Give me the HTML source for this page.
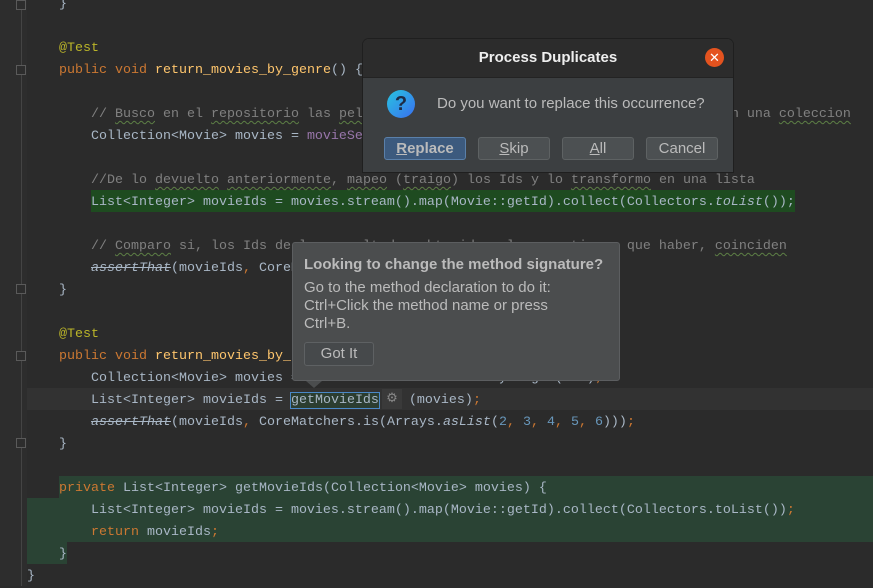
<!DOCTYPE html>
<html><head><meta charset="utf-8">
<style>
body{margin:0;width:873px;height:586px;overflow:hidden;background:#2b2b2b;position:relative;font-family:"Liberation Mono",monospace;}
.gut{position:absolute;left:0;top:0;width:27px;height:586px;background:#2d2d2d;}
.ln{position:absolute;left:27px;height:22px;line-height:22px;font-size:13.33px;color:#a9b7c6;white-space:pre;margin-top:2px}
.k{color:#cc7832}.a{color:#bbb529}.m{color:#ffc66d}.c{color:#808080}.p{color:#9876aa}.n{color:#6897bb}
.s{text-decoration:line-through;font-style:italic}.i{font-style:italic}
.w{text-decoration:underline wavy #5d7f45;text-decoration-thickness:1px;text-underline-offset:3px}
.bg{position:absolute;}
.fold{position:absolute;left:16px;width:10px;height:10px;border:1px solid #5a5a5a;box-sizing:border-box;background:#2d2d2d}
.ui{font-family:"Liberation Sans","DejaVu Sans",sans-serif}
.btn{position:absolute;top:137px;height:23px;border:1px solid #5e6263;background:#4c5052;border-radius:3px;box-sizing:border-box;color:#bbbbbb;font-size:15px;line-height:21px;text-align:center}
</style></head><body>
<div class="gut"></div>
<div style="position:absolute;left:21px;top:0;width:1px;height:586px;background:#444"></div>
<div class="bg" style="left:91px;top:190px;width:704px;height:22px;background:#1e4b20"></div>
<div class="bg" style="left:27px;top:388px;width:846px;height:22px;background:#323232"></div>
<div class="bg" style="left:59px;top:476px;width:814px;height:22px;background:#2a4334"></div>
<div class="bg" style="left:27px;top:498px;width:846px;height:44px;background:#2a4334"></div>
<div class="bg" style="left:27px;top:542px;width:40px;height:22px;background:#2a4334"></div>
<div class="fold" style="top:0"></div><div class="fold" style="top:65px"></div><div class="fold" style="top:284px"></div><div class="fold" style="top:351px"></div><div class="fold" style="top:438px"></div>

<div class="ln" style="top:-8px">    }</div>
<div class="ln" style="top:36px">    <span class="a">@Test</span></div>
<div class="ln" style="top:58px">    <span class="k">public void </span><span class="m">return_movies_by_genre</span>() {</div>
<div class="ln" style="top:102px">        <span class="c">// <span class="w">Busco</span> en el <span class="w">repositorio</span> las <span class="w">peliculas</span> del genero indicado y las guardo toda en una <span class="w">coleccion</span></span></div>
<div class="ln" style="top:124px">        Collection&lt;Movie&gt; movies = <span class="p">movieService</span>.findMoviesByGenre(Genre.<span class="p i">ACTION</span>);</div>
<div class="ln" style="top:168px">        <span class="c">//De lo <span class="w">devuelto</span> <span class="w">anteriormente</span>, <span class="w">mapeo</span> (<span class="w">traigo</span>) los Ids y lo <span class="w">transformo</span> en una lista</span></div>
<div class="ln" style="top:190px">        List&lt;Integer&gt; movieIds = movies.stream().map(Movie::getId).collect(Collectors.<span class="i">toList</span>());</div>
<div class="ln" style="top:234px">        <span class="c">// <span class="w">Comparo</span> si, los Ids de los resultados obtenidos, los que tienen que haber, <span class="w">coinciden</span></span></div>
<div class="ln" style="top:256px">        <span class="s">assertThat</span>(movieIds<span class="k">, </span>CoreMatchers.is(Arrays.<span class="i">asList</span>(<span class="n">1</span><span class="k">, </span><span class="n">2</span>)));</div>
<div class="ln" style="top:278px">    }</div>
<div class="ln" style="top:322px">    <span class="a">@Test</span></div>
<div class="ln" style="top:344px">    <span class="k">public void </span><span class="m">return_movies_by_length</span>() {</div>
<div class="ln" style="top:366px">        Collection&lt;Movie&gt; movies = <span class="p">movieService</span>.findMoviesByLength(<span class="n">120</span>)<span class="k">;</span></div>
<div class="ln" style="top:388px">        List&lt;Integer&gt; movieIds = <span style="background:#2b3d30;outline:1px solid #4a88c7">getMovieIds</span>   <span style="display:inline-block;width:6px"></span>(movies)<span class="k">;</span></div>
<div class="bg" style="left:382px;top:389px;width:20px;height:20px;background:#3a3a3a;color:#888;font-size:13px;text-align:center;line-height:20px;font-family:'DejaVu Sans',sans-serif">⚙</div>
<div class="ln" style="top:410px">        <span class="s">assertThat</span>(movieIds<span class="k">, </span>CoreMatchers.is(Arrays.<span class="i">asList</span>(<span class="n">2</span><span class="k">, </span><span class="n">3</span><span class="k">, </span><span class="n">4</span><span class="k">, </span><span class="n">5</span><span class="k">, </span><span class="n">6</span>)))<span class="k">;</span></div>
<div class="ln" style="top:432px">    }</div>
<div class="ln" style="top:476px">    <span class="k">private </span>List&lt;Integer&gt; getMovieIds(Collection&lt;Movie&gt; movies) {</div>
<div class="ln" style="top:498px">        List&lt;Integer&gt; movieIds = movies.stream().map(Movie::getId).collect(Collectors.toList())<span class="k">;</span></div>
<div class="ln" style="top:520px">        <span class="k">return </span>movieIds<span class="k">;</span></div>
<div class="ln" style="top:542px">    }</div>
<div class="ln" style="top:564px">}</div>

<!-- dialog -->
<div class="ui" style="position:absolute;left:363px;top:39px;width:370px;height:133px;background:#3c3f41;border-radius:6px 6px 0 0;overflow:hidden;box-shadow:0 0 0 1px #1f1f1f">
 <div style="height:38px;background:#2c2c2c;color:#eee;font-weight:bold;font-size:15px;text-align:center;line-height:38px;border-bottom:1px solid #232323">Process Duplicates</div>
 <div style="position:absolute;left:342px;top:9px;width:19px;height:19px;border-radius:50%;background:#e4531f;color:#fff;font-size:13px;text-align:center;line-height:19px">✕</div>
 <div style="position:absolute;left:24px;top:51px;width:28px;height:28px;border-radius:50%;background:linear-gradient(135deg,#27c4e0,#3a6ff0);color:#1d2b45;font-weight:bold;font-size:20px;text-align:center;line-height:28px">?</div>
 <div style="position:absolute;left:74px;top:56px;color:#bbb;font-size:15px">Do you want to replace this occurrence?</div>
</div>
<div class="btn ui" style="left:384px;width:82px;background:#3c5a7e;border-color:#5a80aa;font-weight:bold"><u>R</u>eplace</div>
<div class="btn ui" style="left:478px;width:72px"><u>S</u>kip</div>
<div class="btn ui" style="left:562px;width:72px"><u>A</u>ll</div>
<div class="btn ui" style="left:646px;width:72px">Cancel</div>

<!-- tooltip -->
<div class="ui" style="position:absolute;left:292px;top:242px;width:328px;height:139px;background:#4b4d4e;border:1px solid #5c5e60;box-sizing:border-box;border-radius:3px;color:#bbb">
 <div style="position:absolute;left:11px;top:13px;font-weight:bold;font-size:15px;white-space:nowrap">Looking to change the method signature?</div>
 <div style="position:absolute;left:11px;top:36px;font-size:15px;line-height:18px">Go to the method declaration to do it:<br>Ctrl+Click the method name or press<br>Ctrl+B.</div>
 <div style="position:absolute;left:11px;top:99px;width:70px;height:24px;background:#46494b;border:1px solid #5e6163;box-sizing:border-box;border-radius:3px;text-align:center;line-height:22px;font-size:15px">Got It</div>
</div>
<div style="position:absolute;left:306px;top:381px;width:0;height:0;border-left:8px solid transparent;border-right:8px solid transparent;border-top:7px solid #4b4d4e"></div>
</body></html>
